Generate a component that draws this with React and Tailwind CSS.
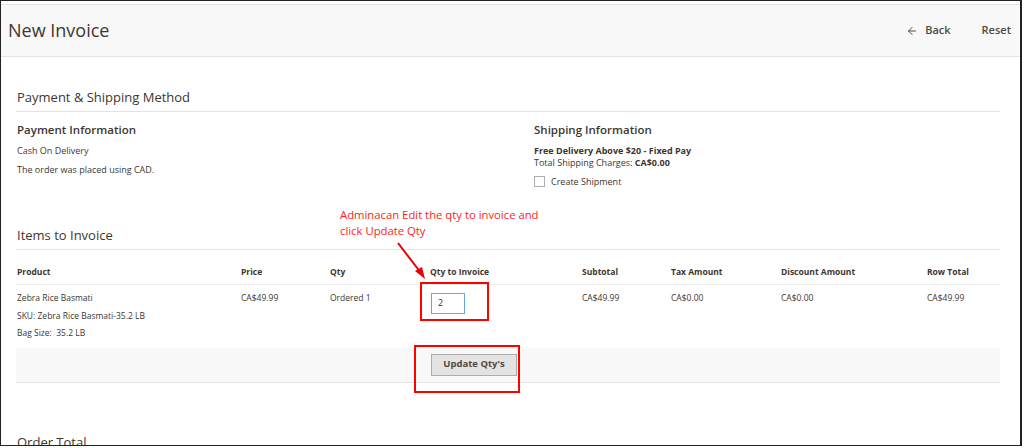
import React from 'react';
import { ArrowLeft } from 'lucide-react';

const cols = 'grid grid-cols-[224px_89px_100px_152px_89px_110px_146px_1fr]';

const App = () => {
  return (
    <div className="w-[1024px] h-[448px] bg-white overflow-hidden font-['Open_Sans',sans-serif] text-[#41362f]">
      <div className="relative w-[1022px] h-[446px] border border-[#222] border-r-2 overflow-hidden">
        {/* page header */}
        <div className="mt-[3px] h-[53px] bg-[#f8f8f8] border-t border-b border-[#e3e3e3] flex items-center justify-between pl-[7px] pr-[9px]">
          <h1 className="text-[18px] text-[#41362f]">New Invoice</h1>
          <div className="flex items-center text-[11px] font-semibold text-[#514943]">
            <ArrowLeft size={12} strokeWidth={2} className="mr-[7px]" />
            <span>Back</span>
            <span className="ml-[31px]">Reset</span>
          </div>
        </div>

        <div className="pl-[15px] pr-[20px]">
          {/* payment & shipping */}
          <div className="mt-[31px] pb-[3px] border-b border-[#e3e3e3] text-[13px] pl-[1px]">Payment &amp; Shipping Method</div>
          <div className="flex pl-[1px]">
            <div className="w-[517px]">
              <div className="mt-[9px] text-[11.5px] font-semibold">Payment Information</div>
              <div className="mt-[7px] text-[9px] leading-[12px]">Cash On Delivery</div>
              <div className="mt-[7px] text-[9px] leading-[12px]">The order was placed using CAD.</div>
            </div>
            <div>
              <div className="mt-[9px] text-[11.5px] font-semibold">Shipping Information</div>
              <div className="mt-[7px] text-[9px] leading-[12px] font-bold">Free Delivery Above $20 - Fixed Pay</div>
              <div className="text-[9px] leading-[12px]">
                Total Shipping Charges: <span className="font-bold">CA$0.00</span>
              </div>
              <label className="mt-[6px] flex items-center text-[9px]">
                <span className="w-[11px] h-[11px] border border-[#adadad] bg-white mr-[6px]" />
                Create Shipment
              </label>
            </div>
          </div>

          {/* items */}
          <div className="mt-[38px] pb-[3px] border-b border-[#e3e3e3] text-[13px] pl-[1px]">Items to Invoice</div>
          <div className={`${cols} mt-[16px] pb-[5px] border-b border-[#ececec] text-[8.5px] font-bold pl-[1px]`}>
            <span>Product</span>
            <span>Price</span>
            <span>Qty</span>
            <span>Qty to Invoice</span>
            <span>Subtotal</span>
            <span>Tax Amount</span>
            <span>Discount Amount</span>
            <span>Row Total</span>
          </div>
          <div className={`${cols} pt-[7px] h-[63px] text-[8.5px] leading-[12px] pl-[1px]`}>
            <div>
              <div>Zebra Rice Basmati</div>
              <div className="mt-[6px]">SKU: Zebra Rice Basmati-35.2 LB</div>
              <div className="mt-[5px]">Bag Size:&nbsp; 35.2 LB</div>
            </div>
            <span>CA$49.99</span>
            <span>Ordered 1</span>
            <div>
              <div className="ml-[1px] w-[34px] h-[21px] border border-[#68a8e0] bg-white flex items-center pl-[6px] text-[9px] mt-[1px]">2</div>
            </div>
            <span>CA$49.99</span>
            <span>CA$0.00</span>
            <span>CA$0.00</span>
            <span>CA$49.99</span>
          </div>
          <div className="h-[35px] bg-[#f8f8f8] border-b border-[#e3e3e3] flex items-center pl-[415px]">
            <button className="w-[86px] h-[22px] bg-[#e3e3e3] border border-[#adadad] text-[9.5px] font-bold text-[#514943]">Update Qty's</button>
          </div>

          <div className="mt-[50px] text-[13px] pl-[1px]">Order Total</div>
        </div>

        {/* annotation overlays */}
        <div className="absolute left-[339px] top-[206px] text-[11.3px] leading-[16px] text-[#f22]">
          <div>Adminacan Edit the qty to invoice and</div>
          <div>click Update Qty</div>
        </div>
        <svg className="absolute left-0 top-0" width="1022" height="446">
          <line x1="397" y1="242" x2="420" y2="272" stroke="#e80000" strokeWidth="2" />
          <polygon points="424,278 414,270 421,266" fill="#e80000" />
        </svg>
        <div className="absolute left-[419px] top-[281px] w-[69px] h-[39px] border-2 border-[#f00]" />
        <div className="absolute left-[413px] top-[344px] w-[106px] h-[48px] border-2 border-[#f00]" />
      </div>
    </div>
  );
};

export default App;
